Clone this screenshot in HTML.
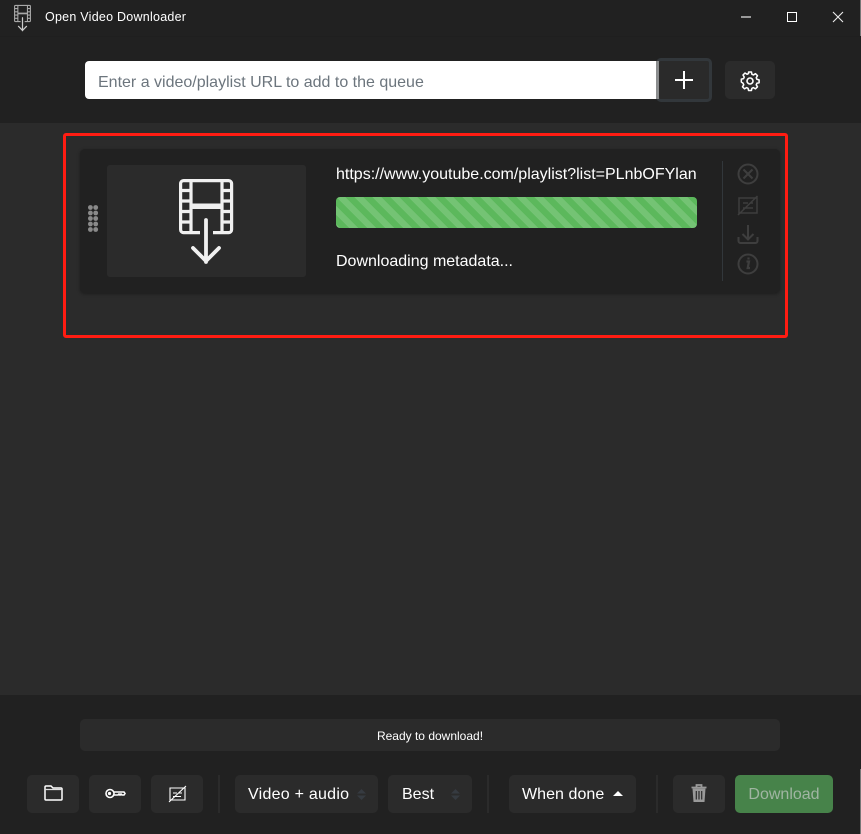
<!DOCTYPE html>
<html><head><meta charset="utf-8"><style>
*{box-sizing:border-box}
html,body{margin:0;padding:0;background:#2b2b2b}
body{width:861px;height:834px;position:relative;overflow:hidden;font-family:"Liberation Sans",sans-serif;color:#fff}
.a{position:absolute}
.t{position:absolute;white-space:nowrap;line-height:20px}
.b{position:absolute;background:#2b2b2b;border-radius:5px;top:775px;height:38px}
svg{position:absolute;overflow:visible;fill:none}
</style></head><body>
<div class="a" style="left:0;top:0;width:861px;height:123px;background:#212121"></div>
<div class="a" style="left:0;top:36px;width:861px;height:1px;background:#1f1f1f"></div>
<div class="a" style="left:0;top:695px;width:861px;height:139px;background:#212121"></div>
<div class="a" style="left:860px;top:0;width:1px;height:36px;background:#777"></div>
<div class="a" style="left:860px;top:769px;width:1px;height:65px;background:#777"></div>

<svg style="left:14px;top:5px" width="17" height="26" viewBox="0 0 54 84" stroke="#a8a8a8" stroke-width="3.500"><rect x="1.400" y="1.400" width="51.200" height="52.200" rx="3"/><path d="M12 1.400v52M43 1.400v52M1.400 11.500H12M1.400 22H12M1.400 32.500H12M1.400 43H12M43 11.500h9.600M43 22h9.600M43 32.500h9.600M43 43h9.600"/><path d="M12 27.300h31" stroke-width="5.500"/><rect x="21" y="50" width="13" height="6" fill="#212121" stroke="none"/><path d="M27 41v42M14 69l13 13 13-13" stroke="#ccc" stroke-width="4" stroke-linecap="round" stroke-linejoin="round"/></svg>
<div class="t" style="left:45px;top:7px;font-size:12.500px;letter-spacing:.02em">Open Video Downloader</div>
<div class="a" style="left:741px;top:16px;width:10px;height:2px;background:#999"></div>
<div class="a" style="left:787px;top:12px;width:10px;height:10px;border:1px solid #fff"></div>
<svg style="left:833px;top:12px" width="10" height="10" stroke="#eee" stroke-width="1.100"><path d="M0 0l10 10M10 0L0 10"/></svg>

<div class="a" style="left:85px;top:61px;width:574px;height:38px;background:#fff;border-radius:4px 0 0 4px"></div>
<div class="t" style="left:98px;top:73px;font-size:16px;color:#6c757d">Enter a video/playlist URL to add to the queue</div>
<div class="a" style="left:656px;top:58px;width:56px;height:44px;border:3px solid #32373b;border-radius:5px;background:#2a2a2a"></div>
<div class="a" style="left:656px;top:61px;width:3px;height:38px;background:#8b8d8e"></div>
<svg style="left:675px;top:71px" width="18" height="18" stroke="#fff" stroke-width="2"><path d="M9 0v18M0 9h18"/></svg>
<div class="a" style="left:725px;top:61px;width:50px;height:38px;background:#2b2b2b;border-radius:5px"></div>
<svg style="left:740px;top:71px" width="20" height="20" viewBox="0 0 20 20" stroke="#fff" stroke-width="1.600" stroke-linejoin="round"><circle cx="10" cy="10" r="3"/><path d="M8.500 1h3l.5 2.400 1.600.7 2.100-1.300 2.100 2.100-1.300 2.100.7 1.600 2.300.6v3l-2.300.6-.7 1.600 1.300 2.100-2.100 2.100-2.100-1.300-1.600.7-.5 2.300h-3l-.5-2.300-1.600-.7-2.100 1.300-2.100-2.100 1.300-2.100-.7-1.600L1 11.500v-3l2.300-.6.700-1.600-1.300-2.100 2.100-2.100 2.100 1.300 1.600-.7z" transform="scale(.96) translate(.4 0)"/></svg>

<div class="a" style="left:63px;top:133px;width:725px;height:205px;border:3px solid #ff1c12;border-radius:3px"></div>
<div class="a" style="left:80px;top:149px;width:700px;height:144px;background:#212121;border-radius:5px;box-shadow:0 1px 3px rgba(0,0,0,.35)"></div>
<svg style="left:88px;top:205px" width="11" height="27"><g fill="#8a8a8a"><circle cx="2.400" cy="2.500" r="2.400"/><circle cx="7.700" cy="2.500" r="2.400"/><circle cx="2.400" cy="8" r="2.400"/><circle cx="7.700" cy="8" r="2.400"/><circle cx="2.400" cy="13.500" r="2.400"/><circle cx="7.700" cy="13.500" r="2.400"/><circle cx="2.400" cy="19" r="2.400"/><circle cx="7.700" cy="19" r="2.400"/><circle cx="2.400" cy="24.500" r="2.400"/><circle cx="7.700" cy="24.500" r="2.400"/></g></svg>
<div class="a" style="left:107px;top:165px;width:199px;height:112px;background:#2b2b2b;border-radius:3px"></div>
<svg style="left:179px;top:179px" width="54" height="84" viewBox="0 0 54 84" stroke="#f0f0f0" stroke-width="3.200"><rect x="1.600" y="1.600" width="51" height="52" rx="3"/><path d="M12 1.400v52M43 1.400v52M1.400 11.500H12M1.400 22H12M1.400 32.500H12M1.400 43H12M43 11.500h9.600M43 22h9.600M43 32.500h9.600M43 43h9.600"/><path d="M12 27.300h31" stroke-width="5.500"/><rect x="21" y="50" width="13" height="6" fill="#2b2b2b" stroke="none"/><path d="M27 41v42M14 69l13 13 13-13" stroke-width="3.800" stroke-linecap="round" stroke-linejoin="round"/></svg>

<div class="t" style="left:336px;top:165px;font-size:16px;width:361px;overflow:hidden">https://www.youtube.com/playlist?list=PLnbOFYlan</div>
<div class="a" style="left:336px;top:197px;width:361px;height:31px;border-radius:4px;background-color:#5cb85c;background-image:linear-gradient(45deg,rgba(255,255,255,.15) 25%,transparent 25%,transparent 50%,rgba(255,255,255,.15) 50%,rgba(255,255,255,.15) 75%,transparent 75%);background-size:18px 18px"></div>
<div class="t" style="left:336px;top:252px;font-size:16px">Downloading metadata...</div>

<div class="a" style="left:722px;top:161px;width:1px;height:120px;background:#32373b"></div>
<svg style="left:737px;top:163px" width="22" height="112" viewBox="0 0 22 112" stroke="#3e3e3e" stroke-width="2"><circle cx="11" cy="11" r="9.500"/><path d="M6.500 6.500l9 9M15.500 6.500l-9 9"/><path d="M2 35h18v15H2zM1 52L20.500 33M6 40h5M13 40h3M6 45h10" stroke-width="1.500"/><path d="M11 62v14M5.500 71l5.500 5.500 5.500-5.500M1.500 74v4a2 2 0 0 0 2 2h15a2 2 0 0 0 2-2v-4"/><circle cx="11" cy="101" r="9.500"/><path d="M9.500 98.500h2.500l-1.300 6.500h2.300M11.500 94.500v2" stroke-width="2.200"/></svg>

<div class="a" style="left:80px;top:719px;width:700px;height:32px;background:#2b2b2b;border-radius:5px"></div>
<div class="t" style="left:80px;width:700px;text-align:center;top:726px;font-size:12px">Ready to download!</div>

<div class="b" style="left:27px;width:52px"></div>
<svg style="left:44px;top:785px" width="19" height="16" stroke="#fff" stroke-width="1.500"><path d="M1 14V2a1 1 0 0 1 1-1h5l2 2h8a1 1 0 0 1 1 1v10a1 1 0 0 1-1 1H2a1 1 0 0 1-1-1z"/><path d="M1 4.500h17" stroke="#ddd" stroke-width="1.200"/></svg>
<div class="b" style="left:89px;width:52px"></div>
<svg style="left:105px;top:788px" width="20" height="11" stroke="#fff" stroke-width="1.600"><circle cx="5" cy="5.500" r="4"/><circle cx="4.500" cy="5.500" r=".8"/><path d="M9 4h10l1 1.500-1 1.500h-2l-1-1-1 1-1-1-1 1H9"/></svg>
<div class="b" style="left:151px;width:52px"></div>
<svg style="left:169px;top:786px" width="17" height="17" stroke="#fff" stroke-width="1.100"><path d="M1 2h15v12H1zM0 16L17 0M4 7h4M10 7h3M4 10.500h8"/></svg>
<div class="a" style="left:218px;top:775px;width:2px;height:38px;background:#2b2b2b"></div>

<div class="b" style="left:235px;width:143px"></div>
<div class="t" style="left:248px;top:785px;font-size:16px;letter-spacing:.25px">Video + audio</div>
<svg style="left:357px;top:789px" width="9" height="11"><path d="M0 4.500L4.500 0 9 4.500zM0 6.500h9L4.500 11z" fill="#363b41"/></svg>
<div class="b" style="left:388px;width:84px"></div>
<div class="t" style="left:402px;top:785px;font-size:16px">Best</div>
<svg style="left:451px;top:789px" width="9" height="11"><path d="M0 4.500L4.500 0 9 4.500zM0 6.500h9L4.500 11z" fill="#363b41"/></svg>
<div class="a" style="left:487px;top:775px;width:2px;height:38px;background:#2b2b2b"></div>
<div class="b" style="left:509px;width:127px"></div>
<div class="t" style="left:522px;top:785px;font-size:16px;letter-spacing:.05px">When done</div>
<svg style="left:613px;top:791px" width="10" height="5"><path d="M0 5L5 0l5 5z" fill="#fff"/></svg>
<div class="a" style="left:656px;top:775px;width:2px;height:38px;background:#2b2b2b"></div>
<div class="b" style="left:673px;width:52px"></div>
<svg style="left:691px;top:784px" width="16" height="18"><path d="M.5 3.500h15M5.500 3V1h5v2" stroke="#999" stroke-width="1.800"/><path d="M1.500 4.500h13l-1 13.500h-11z" fill="#999"/><path d="M5.300 7v8.500M8 7v8.500M10.700 7v8.500" stroke="#2b2b2b" stroke-width="1.200"/></svg>
<div class="b" style="left:735px;width:98px;background:#47834a"></div>
<div class="t" style="left:735px;width:98px;text-align:center;top:785px;font-size:16px;color:#a0b5a2">Download</div>
</body></html>
